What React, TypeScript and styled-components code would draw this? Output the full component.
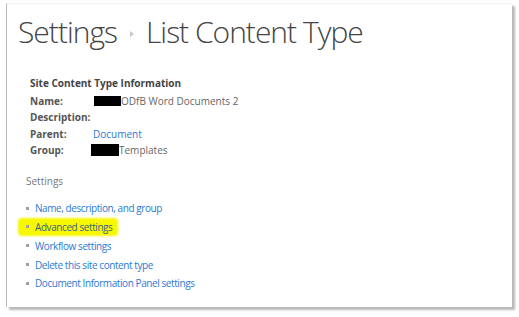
import React from "react";
import styled, { createGlobalStyle } from "styled-components";

const GlobalStyle = createGlobalStyle`
  html, body {
    margin: 0;
    padding: 0;
    background: #ffffff;
  }
  body {
    font-family: "Open Sans", "Liberation Sans", sans-serif;
  }
`;

const Page = styled.div`
  width: 519px;
  height: 317px;
  padding: 3px 0 0 6px;
  box-sizing: border-box;
`;

const Panel = styled.div`
  width: 506px;
  height: 304px;
  box-sizing: border-box;
  background: #fff;
  border-left: 1px solid #b9b9b9;
  border-top: 1px solid #f0f0f0;
  box-shadow: 3px 3px 2px rgba(0, 0, 0, 0.28);
  padding: 8px 0 0 11px;
`;

const TitleRow = styled.h1`
  margin: 0;
  display: flex;
  align-items: center;
  font-weight: 300;
  font-size: 30px;
  line-height: 40px;
  color: #444;
  letter-spacing: -1px;
`;

const Crumb = styled.span`
  display: inline-block;
  width: 0;
  height: 0;
  margin: 4px 12px 0 13px;
  border-top: 3.5px solid transparent;
  border-bottom: 3.5px solid transparent;
  border-left: 4px solid #c8c8c8;
`;

const InfoBlock = styled.section`
  margin: 23px 0 0 12px;
`;

const InfoHeading = styled.div`
  font-weight: 700;
  font-size: 10px;
  color: #444;
  line-height: 16px;
  margin-bottom: 2px;
`;

const InfoGrid = styled.div`
  display: grid;
  grid-template-columns: 63px auto;
  grid-auto-rows: 16.3px;
  align-items: center;
  font-size: 10px;
`;

const Label = styled.span`
  font-weight: 700;
  color: #555;
`;

const Value = styled.span<{ $link?: boolean }>`
  color: ${(p) => (p.$link ? "#2a7ad2" : "#666")};
  display: flex;
  align-items: center;
`;

const Redact = styled.span<{ $w: number; $h: number; $shift: number }>`
  display: inline-block;
  width: ${(p) => p.$w}px;
  height: ${(p) => p.$h}px;
  background: #000;
  margin-left: ${(p) => p.$shift}px;
`;

const SettingsBlock = styled.section`
  margin: 15px 0 0 8px;
`;

const SettingsHeading = styled.div`
  font-size: 10px;
  color: #777;
  line-height: 16px;
  margin-bottom: 11px;
`;

const LinkList = styled.ul`
  list-style: none;
  margin: 0;
  padding: 0;
  display: flex;
  flex-direction: column;
  gap: 2.8px;
`;

const LinkItem = styled.li<{ $highlight?: boolean }>`
  display: flex;
  align-items: center;
  height: 16px;
  font-size: 10px;
  letter-spacing: -0.42px;
  color: ${(p) => (p.$highlight ? "#3b5f8c" : "#2a7ad2")};
  position: relative;
  ${(p) =>
    p.$highlight &&
    `
    &::after {
      content: "";
      position: absolute;
      left: -8px;
      top: -1px;
      width: 100px;
      height: 18px;
      border-radius: 4px;
      background: #f7f700;
      filter: blur(0.8px);
      z-index: 0;
    }
  `}
`;

const Bullet = styled.span`
  position: relative;
  z-index: 1;
  width: 3px;
  height: 3px;
  background: #a0a0a0;
  margin-right: 6px;
  flex: none;
`;

const LinkText = styled.span`
  position: relative;
  z-index: 1;
`;

const links = [
  "Name, description, and group",
  "Advanced settings",
  "Workflow settings",
  "Delete this site content type",
  "Document Information Panel settings",
];

export default function App() {
  return (
    <>
      <GlobalStyle />
      <Page>
        <Panel>
          <TitleRow>
            Settings
            <Crumb />
            List Content Type
          </TitleRow>
          <InfoBlock>
            <InfoHeading>Site Content Type Information</InfoHeading>
            <InfoGrid>
              <Label>Name:</Label>
              <Value>
                <Redact $w={27} $h={10} $shift={1} />
                ODfB Word Documents 2
              </Value>
              <Label>Description:</Label>
              <Value />
              <Label>Parent:</Label>
              <Value $link>Document</Value>
              <Label>Group:</Label>
              <Value>
                <Redact $w={28} $h={12} $shift={-2} />
                Templates
              </Value>
            </InfoGrid>
          </InfoBlock>
          <SettingsBlock>
            <SettingsHeading>Settings</SettingsHeading>
            <LinkList>
              {links.map((l) => (
                <LinkItem key={l} $highlight={l === "Advanced settings"}>
                  <Bullet />
                  <LinkText>{l}</LinkText>
                </LinkItem>
              ))}
            </LinkList>
          </SettingsBlock>
        </Panel>
      </Page>
    </>
  );
}
